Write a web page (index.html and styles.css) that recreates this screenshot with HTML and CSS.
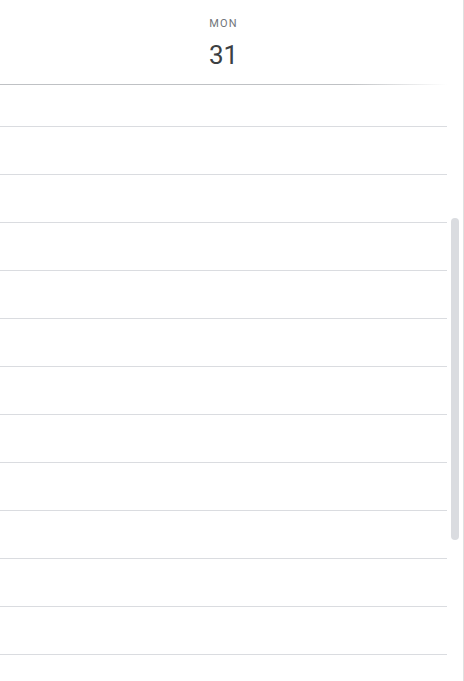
FILE: index.html
```html
<!DOCTYPE html>
<html lang="en">
<head>
    <meta charset="UTF-8">
    <meta name="viewport" content="width=device-width, initial-scale=1.0">
    <title>Day view</title>
    <link rel="stylesheet" href="styles.css">
</head>
<body>
    <div class="calendar">
        <div class="day-column">
            <!-- Day header -->
            <div class="day-header">
                <div class="day-name">MON</div>
                <div class="day-number">31</div>
            </div>
            <div class="header-line"></div>

            <!-- Hour rows -->
            <div class="hours">
                <div class="hour first"></div>
                <div class="hour"></div>
                <div class="hour"></div>
                <div class="hour"></div>
                <div class="hour"></div>
                <div class="hour"></div>
                <div class="hour"></div>
                <div class="hour"></div>
                <div class="hour"></div>
                <div class="hour"></div>
                <div class="hour"></div>
                <div class="hour"></div>
                <div class="hour"></div>
            </div>
        </div>

        <!-- Scrollbar -->
        <div class="scroll-track">
            <div class="scroll-thumb"></div>
        </div>
    </div>
</body>
</html>
```

FILE: styles.css
```css
/* Global styling */
* {
    margin: 0;
    padding: 0;
    box-sizing: border-box;
}
body, html {
    width: 100%;
    height: 100%;
    font-family: Roboto, "Noto Sans", Arial, sans-serif;
    background-color: #fff;
    overflow: hidden;
}
.calendar {
    display: flex;
    width: 464px;
    height: 681px;
    border-right: 1px solid #e0e0e0;
}
.day-column {
    width: 447px;
    display: flex;
    flex-direction: column;
    overflow: hidden;
}
/* Header */
.day-header {
    flex-shrink: 0;
    height: 84px;
    display: flex;
    flex-direction: column;
    align-items: center;
    padding-top: 18px;
}
.day-name {
    font-size: 11px;
    font-weight: 400;
    letter-spacing: 1.2px;
    color: #70757a;
    line-height: 12px;
}
.day-number {
    font-size: 26px;
    color: #3c4043;
    line-height: 28px;
    margin-top: 11px;
}
.header-line {
    flex-shrink: 0;
    height: 1px;
    background: linear-gradient(to right, #bfc1c4 0%, #bfc1c4 78%, #fff 100%);
}
/* Hour rows */
.hours {
    flex-shrink: 0;
}
.hour {
    height: 48px;
    border-bottom: 1px solid #dadce0;
}
.hour.first {
    height: 42px;
}
/* Scrollbar */
.scroll-track {
    width: 16px;
    padding: 218px 0 0 4px;
}
.scroll-thumb {
    width: 8px;
    height: 322px;
    border-radius: 4px;
    background-color: #dadce0;
}
```
